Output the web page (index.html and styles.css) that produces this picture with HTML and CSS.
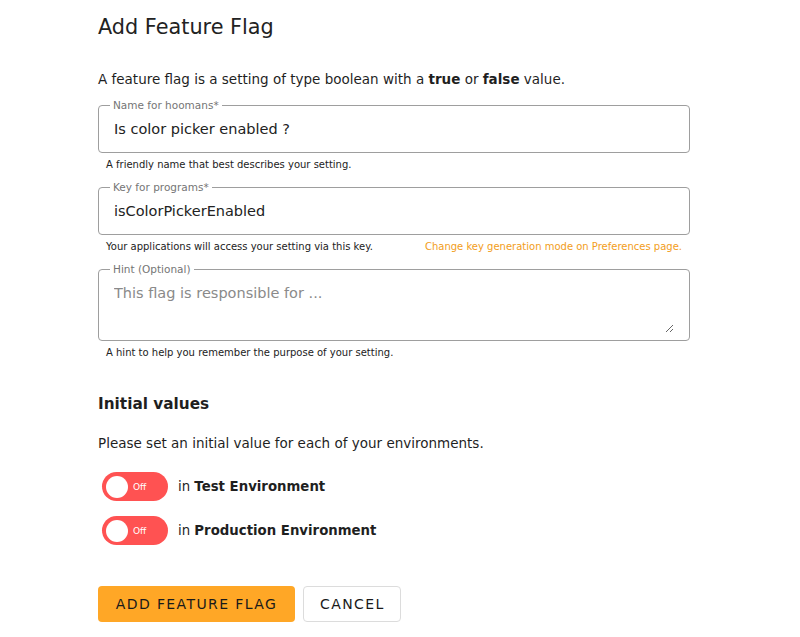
FILE: index.html
```html
<!DOCTYPE html>
<html lang="en">
<head>
<meta charset="utf-8">
<title>Add Feature Flag</title>
<link rel="stylesheet" href="styles.css">
</head>
<body>
<main class="dialog">
  <h1 class="title">Add Feature Flag</h1>
  <p class="intro lead">A feature flag is a setting of type boolean with a <b>true</b> or <b>false</b> value.</p>

  <div class="field">
    <fieldset class="outline">
      <legend>Name for hoomans*</legend>
      <input class="control" type="text" value="Is color picker enabled ?">
    </fieldset>
    <div class="hints"><span>A friendly name that best describes your setting.</span></div>
  </div>

  <div class="field">
    <fieldset class="outline">
      <legend>Key for programs*</legend>
      <input class="control" type="text" value="isColorPickerEnabled">
    </fieldset>
    <div class="hints"><span>Your applications will access your setting via this key.</span><span class="link">Change key generation mode on Preferences page.</span></div>
  </div>

  <div class="field">
    <fieldset class="outline tall">
      <legend>Hint (Optional)</legend>
      <textarea class="control area" placeholder="This flag is responsible for ..."></textarea>
    </fieldset>
    <div class="hints"><span>A hint to help you remember the purpose of your setting.</span></div>
  </div>

  <h2 class="subtitle">Initial values</h2>
  <p class="intro">Please set an initial value for each of your environments.</p>

  <div class="envs">
    <div class="env">
      <span class="toggle"><span class="knob"></span><span class="state">Off</span></span>
      <span>in <b>Test Environment</b></span>
    </div>
    <div class="env">
      <span class="toggle"><span class="knob"></span><span class="state">Off</span></span>
      <span>in <b>Production Environment</b></span>
    </div>
  </div>

  <div class="actions">
    <button class="btn primary">ADD FEATURE FLAG</button>
    <button class="btn secondary">CANCEL</button>
  </div>
</main>
</body>
</html>
```
FILE: styles.css
```css
* { box-sizing: border-box; }
html, body { margin: 0; padding: 0; background: #fff; }
body {
  font-family: "DejaVu Sans", "Open Sans", sans-serif;
  color: #1f1f1f;
  width: 800px;
  height: 637px;
  overflow: hidden;
}
.dialog {
  width: 592px;
  margin-left: 98px;
  padding-top: 13px;
}
.title {
  font-size: 20.8px;
  font-weight: 400;
  margin: 0 0 28px 0;
  line-height: 28px;
  color: #222;
}
.intro {
  font-size: 13.5px;
  margin: 0 0 8px 0;
  line-height: 20px;
}
.intro.lead { margin-bottom: 15px; }
.intro b { font-weight: 700; }
.field { margin-bottom: 7px; }
.outline {
  margin: 0;
  padding: 0 15px;
  border: 1px solid #9e9e9e;
  border-radius: 4px;
  height: 54px;
  margin-top: -5px;
}
.outline.tall { height: 78px; }
.outline legend {
  font-size: 10.5px;
  color: #757575;
  padding: 0 3px;
  margin-left: -4px;
  line-height: 12px;
}
.control {
  display: block;
  width: 100%;
  border: 0;
  outline: 0;
  padding: 0;
  margin: 8px 0 0 0;
  font: inherit;
  font-size: 14.5px;
  color: #222;
  background: transparent;
  line-height: 20px;
}
.area {
  height: 50px;
  margin-top: 8px;
  resize: vertical;
}
.area::placeholder { color: #8a8a8a; }
.hints {
  display: flex;
  justify-content: space-between;
  font-size: 10px;
  line-height: 14px;
  padding: 5px 8px 0 8px;
  color: #222;
  height: 26px;
}
.hints .link { color: #f29d1a; }
.subtitle {
  font-size: 15.3px;
  font-weight: 700;
  margin: 26px 0 18px 0;
  line-height: 22px;
}
.envs {
  display: flex;
  flex-direction: column;
  gap: 15px;
  margin-top: 19px;
  padding-left: 4px;
}
.env {
  display: flex;
  align-items: center;
  gap: 10px;
  font-size: 13.3px;
}
.env b { font-weight: 700; }
.toggle {
  display: inline-flex;
  align-items: center;
  width: 66px;
  height: 29px;
  border-radius: 15px;
  background: #ff5252;
  padding-left: 4px;
  gap: 5px;
}
.knob {
  width: 22px;
  height: 22px;
  border-radius: 50%;
  background: #fff;
}
.state {
  color: #fff;
  font-size: 9px;
}
.actions {
  display: flex;
  gap: 8px;
  margin-top: 41px;
}
.btn {
  font: inherit;
  font-size: 14px;
  letter-spacing: 1.4px;
  height: 36px;
  border-radius: 4px;
  padding: 0 16px;
  cursor: pointer;
  color: #1a1a1a;
}
.primary {
  background: #ffa726;
  border: 0;
  width: 197px;
}
.secondary {
  background: #fff;
  border: 1px solid #dcdcdc;
  width: 98px;
}
```
